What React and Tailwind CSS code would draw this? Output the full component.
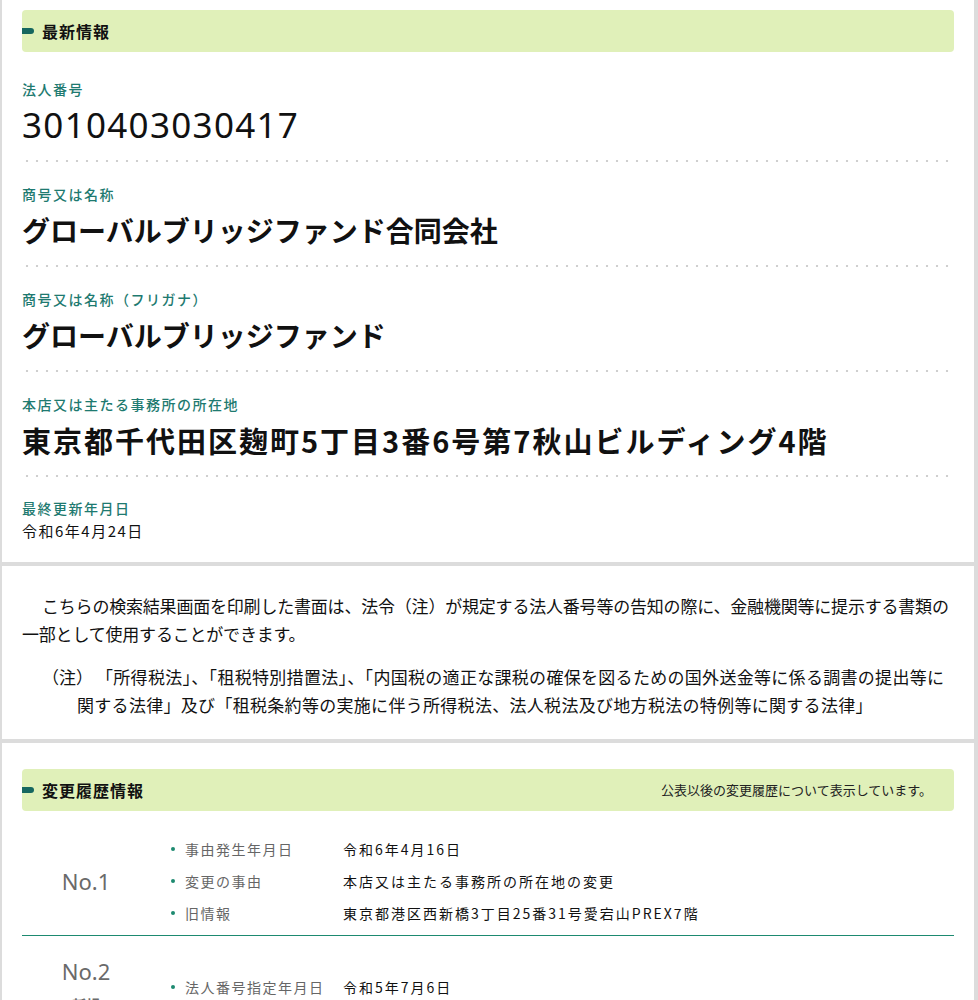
import React from "react";

const font = { fontFamily: '"Noto Sans CJK JP", "Noto Sans", sans-serif' };

const latest = [
    { label: "法人番号", value: "3010403030417", kind: "num" },
    { label: "商号又は名称", value: "グローバルブリッジファンド合同会社", kind: "name" },
    { label: "商号又は名称（フリガナ）", value: "グローバルブリッジファンド", kind: "name" },
    { label: "本店又は主たる事務所の所在地", value: "東京都千代田区麹町5丁目3番6号第7秋山ビルディング4階", kind: "addr" },
];

const history = [
    {
        no: "No.1",
        rows: [
            ["事由発生年月日", "令和6年4月16日"],
            ["変更の事由", "本店又は主たる事務所の所在地の変更"],
            ["旧情報", "東京都港区西新橋3丁目25番31号愛宕山PREX7階"],
        ],
    },
    {
        no: "No.2",
        tag: "新規",
        rows: [
            ["法人番号指定年月日", "令和5年7月6日"],
            ["事由発生年月日", "令和5年7月6日"],
            ["変更の事由", "新規"],
        ],
    },
];

const SectionTitle = ({ title, note }) => (
    <div className="flex items-center h-[42px] rounded-[4px] bg-[#e0f0b9]">
        <span className="w-[12px] h-[6px] rounded-r-full bg-[#16675f]"></span>
        <span className="ml-[8px] text-[16px] font-bold tracking-[1px] text-[#111]">{title}</span>
        {note && <span className="ml-auto pr-[22px] text-[13px] text-[#222]">{note}</span>}
    </div>
);

const Dotted = () => (
    <div className="h-[2px] bg-[radial-gradient(circle,#cfcfcf_1px,transparent_1.6px)] bg-[length:10px_2px] bg-repeat-x"></div>
);

const Label = ({ children }) => (
    <div className="text-[14px] leading-[20px] tracking-[1.5px] font-medium text-[#1e7a70]">{children}</div>
);

const Value = ({ kind, value }) => {
    if (kind === "num") {
        return <div className="mt-[6px] leading-[40px] text-[35px] tracking-[1.3px] text-[#111]" style={{ fontFamily: '"Noto Sans", "Noto Sans CJK JP", sans-serif' }}>{value}</div>;
    }
    if (kind === "addr") {
        return <div className="mt-[6px] leading-[40px] text-[29px] font-bold tracking-[2px] text-[#111]">{value}</div>;
    }
    return <div className="mt-[6px] leading-[40px] text-[28px] font-bold text-[#111]">{value}</div>;
};

const HistoryGroup = ({ item, first }) => (
    <div className={first ? "flex items-center pt-[22px] pb-[6px] border-b border-[#1d8a70]" : "flex items-start pt-[20px]"}>
        <div className="w-[128px] flex flex-col items-center">
            <div className="text-[22px] leading-[30px] text-[#6a6a6a]" style={{ fontFamily: '"Noto Sans", sans-serif' }}>{item.no}</div>
            {item.tag && <div className="mt-[8px] text-[14px] font-bold text-[#6a6a6a]">{item.tag}</div>}
        </div>
        <div className={first ? "pl-[21px]" : "pl-[21px] mt-[15px]"}>
            {item.rows.map(([label, value]) => (
                <div key={label + value} className="flex items-center h-[32px] text-[14px] tracking-[1.5px]">
                    <span className="w-[4px] h-[4px] rounded-full bg-[#1d8a70] mr-[10px]"></span>
                    <span className="w-[158px] text-[#666]">{label}</span>
                    <span className="text-[#111] tracking-[2px]">{value}</span>
                </div>
            ))}
        </div>
    </div>
);

export default function App() {
    return (
        <div className="min-h-[1000px] bg-[#dcdcdc] pl-[2px] pr-[4px] flex flex-col gap-[4px]" style={font}>
            {/* 最新情報 */}
            <section className="bg-white px-[20px] pt-[10px] pb-[20px]">
                <SectionTitle title="最新情報" />
                <div className="mt-[5px]">
                    {latest.map((item) => (
                        <div key={item.label}>
                            <div className="pt-[22px] pb-[15px]">
                                <Label>{item.label}</Label>
                                <Value kind={item.kind} value={item.value} />
                            </div>
                            <Dotted />
                        </div>
                    ))}
                    <div className="pt-[21px]">
                        <Label>最終更新年月日</Label>
                        <div className="mt-[2px] text-[15px] leading-[22px] tracking-[1.5px] text-[#111]">令和6年4月24日</div>
                    </div>
                </div>
            </section>

            {/* 注意書き */}
            <section className="bg-white px-[20px] pt-[26px] pb-[20px] leading-[28px] text-[#111]">
                <p className="text-[17px] tracking-[-0.2px] indent-[20px] whitespace-nowrap">
                    こちらの検索結果画面を印刷した書面は、法令（注）が規定する法人番号等の告知の際に、金融機関等に提示する書類の
                    <br />
                    一部として使用することができます。
                </p>
                <p className="mt-[15px] text-[17px] tracking-[0.3px] pl-[55px] -indent-[35px] whitespace-nowrap">
                    <span className="inline-block w-[54px] indent-0 tracking-normal">（注）</span>
                    「所得税法」、「租税特別措置法」、「内国税の適正な課税の確保を図るための国外送金等に係る調書の提出等に
                    <br />
                    関する法律」及び「租税条約等の実施に伴う所得税法、法人税法及び地方税法の特例等に関する法律」
                </p>
            </section>

            {/* 変更履歴情報 */}
            <section className="flex-1 bg-white px-[20px] pt-[26px]">
                <SectionTitle title="変更履歴情報" note="公表以後の変更履歴について表示しています。" />
                {history.map((item, i) => (
                    <HistoryGroup key={item.no} item={item} first={i === 0} />
                ))}
            </section>
        </div>
    );
}
